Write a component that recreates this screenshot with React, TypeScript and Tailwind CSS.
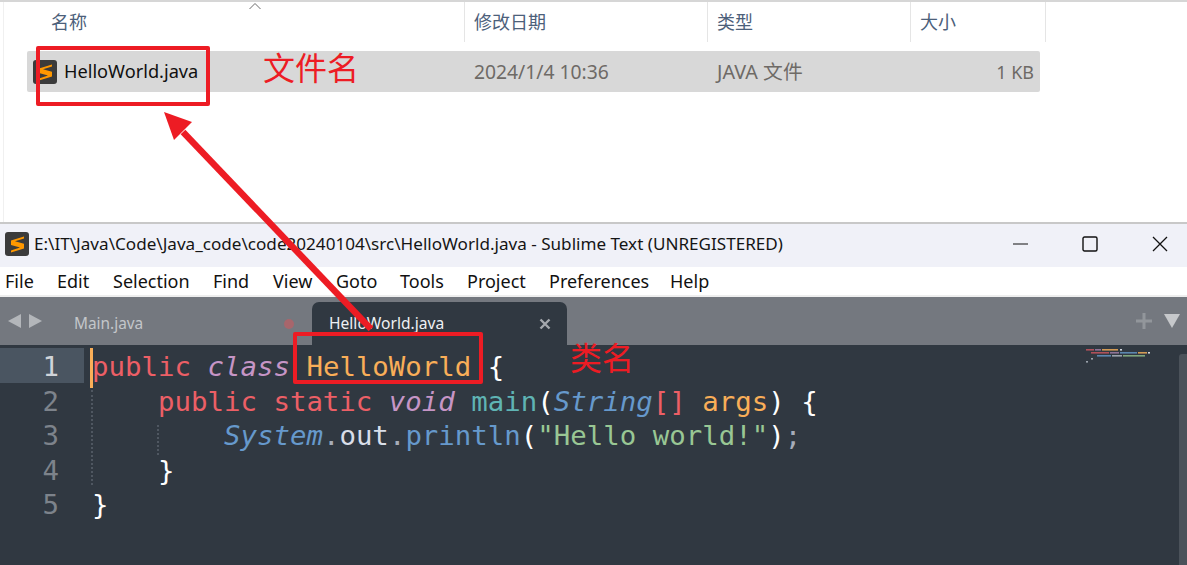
import React from "react";

const ui = "font-['Noto_Sans','Noto_Sans_CJK_SC',sans-serif]";

function SublimeIcon() {
  return (
    <svg width="24" height="24" viewBox="0 0 24 24" className="shrink-0">
      <rect x="0" y="0" width="24" height="24" rx="3" fill="#3b3b3b" />
      <path d="M19 4.5 L6 8.6 V13 L15 15.6 L6 18.6 V20.5 L19 16.4 V11.8 L10 9.2 L19 6.4 Z" fill="#ff9800" />
    </svg>
  );
}

const P = ({ c, children }: { c: string; children: React.ReactNode }) => <span className={c}>{children}</span>;

function Explorer() {
  return (
    <div className="relative h-[222px] shrink-0 bg-white border-t-2 border-[#d6d6d6] border-l-0">
      <div className="h-full ml-[3px] border-l border-[#f0f0f0] flex flex-col">
        <div className={`relative h-10 flex text-[#4c607a] text-[18px] leading-[26px] ${ui}`}>
          <div className="w-[461px] pl-[47px] pt-[7px] border-r border-[#e5e5e5]">名称</div>
          <div className="w-[243px] pl-[9px] pt-[7px] border-r border-[#e5e5e5]">修改日期</div>
          <div className="w-[203px] pl-[9px] pt-[7px] border-r border-[#e5e5e5]">类型</div>
          <div className="w-[135px] pl-[9px] pt-[7px] border-r border-[#e5e5e5]">大小</div>
          <svg width="14" height="8" viewBox="0 0 14 8" className="absolute left-[244px] top-0">
            <path d="M1.5 7 L7 1.5 L12.5 7" fill="none" stroke="#6b6b6b" strokeWidth="1" />
          </svg>
        </div>
        <div className={`ml-[23px] mt-[9px] w-[1013px] h-[41px] bg-[#d8d8d8] rounded-[2px] flex items-center pt-[1px] ${ui}`}>
          <div className="w-[438px] pl-[6px] flex items-center gap-[7px] text-[#101010] text-[18.2px]">
            <SublimeIcon />
            <span>HelloWorld.java</span>
          </div>
          <div className="w-[243px] pl-[9px] text-[#6e6a66] text-[19.3px]">2024/1/4 10:36</div>
          <div className="w-[203px] pl-[9px] text-[#6e6a66] text-[19.8px]">JAVA 文件</div>
          <div className="flex-1 pr-[6px] text-right text-[#6e6a66] text-[18px]">1 KB</div>
        </div>
      </div>
    </div>
  );
}

function TitleBar() {
  return (
    <div className="h-[45px] shrink-0 bg-[#f0f1f8] flex items-center pl-[5px] pb-[3px] border-t-2 border-[#c8c8c8]">
      <SublimeIcon />
      <span className={`ml-[5px] text-[17.1px] text-[#151515] whitespace-nowrap ${ui}`}>
        E:\IT\Java\Code\Java_code\code20240104\src\HelloWorld.java - Sublime Text (UNREGISTERED)
      </span>
      <div className="ml-auto flex items-center">
        <svg width="16" height="16" viewBox="0 0 16 16" className="mr-[53px]"><path d="M0 8 H15" stroke="#111" strokeWidth="1" /></svg>
        <svg width="16" height="16" viewBox="0 0 16 16" className="mr-[54px]"><rect x="1" y="1" width="14" height="14" rx="1.5" fill="none" stroke="#111" strokeWidth="1.4" /></svg>
        <svg width="16" height="16" viewBox="0 0 16 16" className="mr-[19px]"><path d="M1 1 L15 15 M15 1 L1 15" stroke="#111" strokeWidth="1.3" /></svg>
      </div>
    </div>
  );
}

function MenuBar() {
  const items: [string, string][] = [
    ["File", "w-[52px]"],
    ["Edit", "w-[56px]"],
    ["Selection", "w-[100px]"],
    ["Find", "w-[60px]"],
    ["View", "w-[63px]"],
    ["Goto", "w-[64px]"],
    ["Tools", "w-[67px]"],
    ["Project", "w-[82px]"],
    ["Preferences", "w-[121px]"],
    ["Help", "w-[50px]"],
  ];
  return (
    <div className={`h-[30px] shrink-0 bg-white border-b-2 border-[#eeeeee] pl-[5px] flex items-center text-[18px] text-[#111] ${ui}`}>
      {items.map(([m, w]) => <span key={m} className={w}>{m}</span>)}
    </div>
  );
}

function TabBar() {
  return (
    <div className={`h-[48px] shrink-0 bg-[#74787f] flex items-end relative ${ui}`}>
      <div className="h-full flex items-center pl-[8px] gap-[8px] w-[74px] shrink-0">
        <svg width="13" height="14" viewBox="0 0 13 14"><path d="M13 0 V14 L0 7 Z" fill="#b3b6ba" /></svg>
        <svg width="13" height="14" viewBox="0 0 13 14"><path d="M0 0 V14 L13 7 Z" fill="#b3b6ba" /></svg>
      </div>
      <div className="h-[43px] w-[238px] shrink-0 flex items-center justify-between text-[#c3c6ca] text-[15.4px]">
        <span>Main.java</span>
        <span className="w-[10px] h-[10px] rounded-full bg-[#a8666c] mr-[18px]" />
      </div>
      <div className="h-[43px] w-[255px] shrink-0 bg-[#303841] rounded-t-[7px] flex items-center justify-between pl-[17px] pr-[16px] text-[#eef0f3] text-[15.6px]">
        <span>HelloWorld.java</span>
        <svg width="12" height="12" viewBox="0 0 12 12"><path d="M1.5 1.5 L10.5 10.5 M10.5 1.5 L1.5 10.5" stroke="#a4a8ad" strokeWidth="2.4" /></svg>
      </div>
      <div className="ml-auto h-full flex items-center pr-[7px] gap-[12px]">
        <svg width="16" height="16" viewBox="0 0 16 16"><path d="M8 0 V16 M0 8 H16" stroke="#92969b" strokeWidth="3" /></svg>
        <svg width="16" height="14" viewBox="0 0 16 14"><path d="M0 0 H16 L8 14 Z" fill="#c6c8cb" /></svg>
      </div>
    </div>
  );
}

function Minimap() {
  return (
    <svg width="66" height="18" viewBox="0 0 66 18" className="absolute left-[1085px] top-[1px]">
      <rect x="1" y="3" width="8" height="1.6" fill="#b0505a" /><rect x="10" y="3" width="6" height="1.6" fill="#8f7396" /><rect x="17" y="3" width="16" height="1.6" fill="#d49b55" /><rect x="35" y="3" width="2" height="1.6" fill="#cfd4dc" />
      <rect x="6" y="6" width="18" height="1.6" fill="#b0505a" /><rect x="25" y="6" width="9" height="1.6" fill="#8f7396" /><rect x="35" y="6" width="17" height="1.6" fill="#5c87b0" /><rect x="53" y="6" width="9" height="1.6" fill="#d49b55" /><rect x="63" y="6" width="2" height="1.6" fill="#cfd4dc" />
      <rect x="12" y="9" width="14" height="1.6" fill="#5c87b0" /><rect x="27" y="9" width="10" height="1.6" fill="#9aa2ac" /><rect x="38" y="9" width="22" height="1.6" fill="#7fa67e" />
      <rect x="6" y="12" width="2" height="1.6" fill="#9aa2ac" /><rect x="1" y="15" width="2" height="1.6" fill="#9aa2ac" />
    </svg>
  );
}

function Editor() {
  const lines: React.ReactNode[] = [
    <><P c="text-[#ec5f66]">public</P> <P c="italic text-[#c695c6]">class</P> <P c="text-[#f9ae58]">HelloWorld</P> <P c="text-white">{"{"}</P></>,
    <>{"    "}<P c="text-[#ec5f66]">public static</P> <P c="italic text-[#c695c6]">void</P> <P c="text-[#5fb4b4]">main</P><P c="text-white">(</P><P c="italic text-[#6699cc]">String</P><P c="text-[#ec5f66]">[]</P> <P c="text-[#f9ae58]">args</P><P c="text-white">) {"{"}</P></>,
    <>{"        "}<P c="italic text-[#6699cc]">System</P><P c="text-[#a6acb9]">.</P><P c="text-[#d8dee9]">out</P><P c="text-[#a6acb9]">.</P><P c="text-[#6699cc]">println</P><P c="text-white">(</P><P c="text-[#99c794]">"Hello world!"</P><P c="text-white">)</P><P c="text-[#a6acb9]">;</P></>,
    <>{"    "}<P c="text-white">{"}"}</P></>,
    <P c="text-white">{"}"}</P>,
  ];
  return (
    <div className="relative flex-1 bg-[#303841] pt-[3px] overflow-hidden font-['DejaVu_Sans_Mono',monospace] text-[27.4px] leading-[38.6px]">
      {lines.map((l, i) => (
        <div key={i} className="flex h-[34.6px] whitespace-pre">
          <div className={`w-[84px] shrink-0 pr-[25px] text-right ${i === 0 ? "bg-[#4a5561] text-[#d0d4d9]" : "text-[#7d838b]"}`}>{i + 1}</div>
          <div className="pl-[8px]">{l}</div>
        </div>
      ))}
      <div className="absolute left-[90px] top-[3px] w-[2.5px] h-[40px] bg-[#f9ae58]" />
      <div className="absolute left-[91px] top-[45px] h-[95px] border-l-2 border-dotted border-[#4f5761]" />
      <div className="absolute left-[157px] top-[80px] h-[30px] border-l-2 border-dotted border-[#4f5761]" />
      <Minimap />
      <div className="absolute right-0 top-[9px] bottom-0 w-[8px] bg-[#4b525a] rounded-tl-[3px]" />
    </div>
  );
}

function Annotations() {
  return (
    <>
      <div className="absolute left-[36px] top-[46px] w-[174px] h-[60px] border-[4px] border-[#ed1c24] rounded-[2px]" />
      <div className="absolute left-[293px] top-[332px] w-[190px] h-[52px] border-[4px] border-[#ed1c24] rounded-[2px]" />
      <svg width="1187" height="565" viewBox="0 0 1187 565" className="absolute left-0 top-0 pointer-events-none">
        <path d="M371 329 L183 132" stroke="#ed1c24" strokeWidth="6.5" fill="none" />
        <path d="M164 112 L192 122 L174 140 Z" fill="#ed1c24" />
      </svg>
      <span className="absolute left-[263px] top-[44px] text-[32px] leading-[44px] text-[#ed1c24] font-['Noto_Sans_CJK_SC',sans-serif]">文件名</span>
      <span className="absolute left-[570px] top-[334px] text-[32px] leading-[44px] text-[#ed1c24] font-['Noto_Sans_CJK_SC',sans-serif]">类名</span>
    </>
  );
}

export default function App() {
  return (
    <div className="relative w-[1187px] h-[565px] overflow-hidden flex flex-col bg-white">
      <Explorer />
      <TitleBar />
      <MenuBar />
      <TabBar />
      <Editor />
      <Annotations />
    </div>
  );
}
